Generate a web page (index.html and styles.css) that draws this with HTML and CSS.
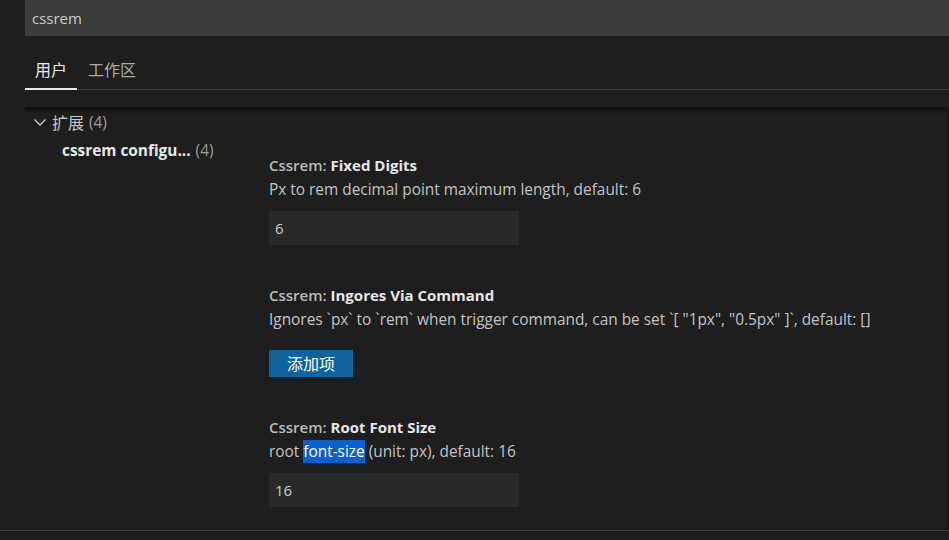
FILE: index.html
```html
<!DOCTYPE html>
<html lang="zh">
<head>
<meta charset="utf-8">
<title>Settings</title>
<link rel="stylesheet" href="styles.css">
</head>
<body>
<div class="editor">
  <div class="search">cssrem</div>
  <div class="tabs">
    <div class="tab active">用户</div>
    <div class="tab">工作区</div>
  </div>
  <div class="body">
    <div class="toc">
      <div class="toc-row group">
        <svg class="chev" width="14" height="14" viewBox="0 0 14 14"><path d="M1.5 4.5 L7 10 L12.5 4.5" fill="none" stroke="#c5c5c5" stroke-width="1.3"/></svg>
        <span class="toc-label cjk">扩展</span><span class="count">(4)</span>
      </div>
      <div class="toc-row sub">
        <span class="toc-label strong">cssrem configu...</span><span class="count">(4)</span>
      </div>
    </div>
    <div class="list">
      <div class="item">
        <div class="title"><span class="cat">Cssrem: </span><span class="name">Fixed Digits</span></div>
        <div class="desc">Px to rem decimal point maximum length, default: 6</div>
        <div class="input">6</div>
      </div>
      <div class="item">
        <div class="title"><span class="cat">Cssrem: </span><span class="name">Ingores Via Command</span></div>
        <div class="desc">Ignores `px` to `rem` when trigger command, can be set `[ "1px", "0.5px" ]`, default: []</div>
        <div class="btn">添加项</div>
      </div>
      <div class="item">
        <div class="title"><span class="cat">Cssrem: </span><span class="name">Root Font Size</span></div>
        <div class="desc">root <span class="hl">font-size</span> (unit: px), default: 16</div>
        <div class="input">16</div>
      </div>
    </div>
  </div>
  <div class="footer"></div>
</div>
</body>
</html>
```
FILE: styles.css
```css
html, body {
  margin: 0;
  padding: 0;
  background: #1e1e1e;
}
body {
  width: 949px;
  height: 540px;
  overflow: hidden;
  font-family: "Segoe UI", "Open Sans", "Noto Sans CJK SC", sans-serif;
  font-size: 15px;
  color: #cccccc;
}
.editor {
  display: flex;
  flex-direction: column;
  height: 540px;
}
.search {
  flex: none;
  margin-left: 25px;
  height: 36px;
  background: #3c3c3c;
  padding-left: 7px;
  line-height: 36px;
  font-size: 15px;
  color: #cccccc;
}
.tabs {
  flex: none;
  margin-left: 25px;
  height: 54px;
  display: flex;
  align-items: flex-end;
  border-bottom: 1px solid #3c3c3c;
  box-sizing: border-box;
}
.tab {
  padding: 0 10px;
  height: 34px;
  line-height: 26px;
  font-family: "Noto Sans CJK SC", sans-serif;
  font-size: 16px;
  color: #a9a9a9;
  box-sizing: border-box;
  margin-bottom: -1px;
}
.tab + .tab { padding-left: 11px; }
.tab.active {
  color: #e7e7e7;
  border-bottom: 2px solid #e7e7e7;
}
.body {
  margin-top: 17px;
  margin-left: 25px;
  flex: 1;
  min-height: 0;
  overflow: hidden;
  display: flex;
  box-shadow: inset 0 6px 6px -6px #000000;
  border-top: 1px solid #141414;
  border-right: 3px solid #191919;
}
.toc {
  width: 244px;
  flex: none;
}
.toc-row {
  height: 28px;
  display: flex;
  align-items: center;
  white-space: nowrap;
}
.toc-row.group { padding-left: 8px; }
.toc-row.sub { padding-left: 37px; }
.chev { margin-right: 5px; }
.toc-label {
  color: #c8c8c8;
  font-size: 15.4px;
}
.toc-label.cjk {
  font-family: "Noto Sans CJK SC", sans-serif;
  font-size: 16px;
}
.toc-label.strong {
  font-weight: 700;
  color: #e7e7e7;
}
.count {
  margin-left: 5px;
  font-size: 15.4px;
  color: #9d9d9d;
}
.list {
  padding-top: 45px;
}
.item {
  padding-bottom: 38px;
}
.title {
  height: 25px;
  line-height: 24px;
  white-space: nowrap;
}
.cat { color: #bbbbbb; font-weight: 600; }
.name { color: #e7e7e7; font-weight: 700; }
.desc {
  height: 23px;
  line-height: 24px;
  font-size: 15.4px;
  color: #c4c4c4;
  white-space: nowrap;
}
.hl {
  background: #0a60d0;
  color: #ffffff;
  padding: 1px 0;
}
.input {
  margin-top: 10px;
  width: 250px;
  height: 34px;
  line-height: 34px;
  background: #292929;
  padding-left: 6px;
  box-sizing: border-box;
  color: #cccccc;
}
.btn {
  margin-top: 19px;
  width: 84px;
  height: 27px;
  line-height: 27px;
  background: #0e639c;
  color: #ffffff;
  text-align: center;
  font-family: "Noto Sans CJK SC", sans-serif;
  font-size: 16px;
}
.footer {
  height: 10px;
  border-top: 1px solid #3c3c3c;
  box-sizing: border-box;
  flex: none;
}
```
